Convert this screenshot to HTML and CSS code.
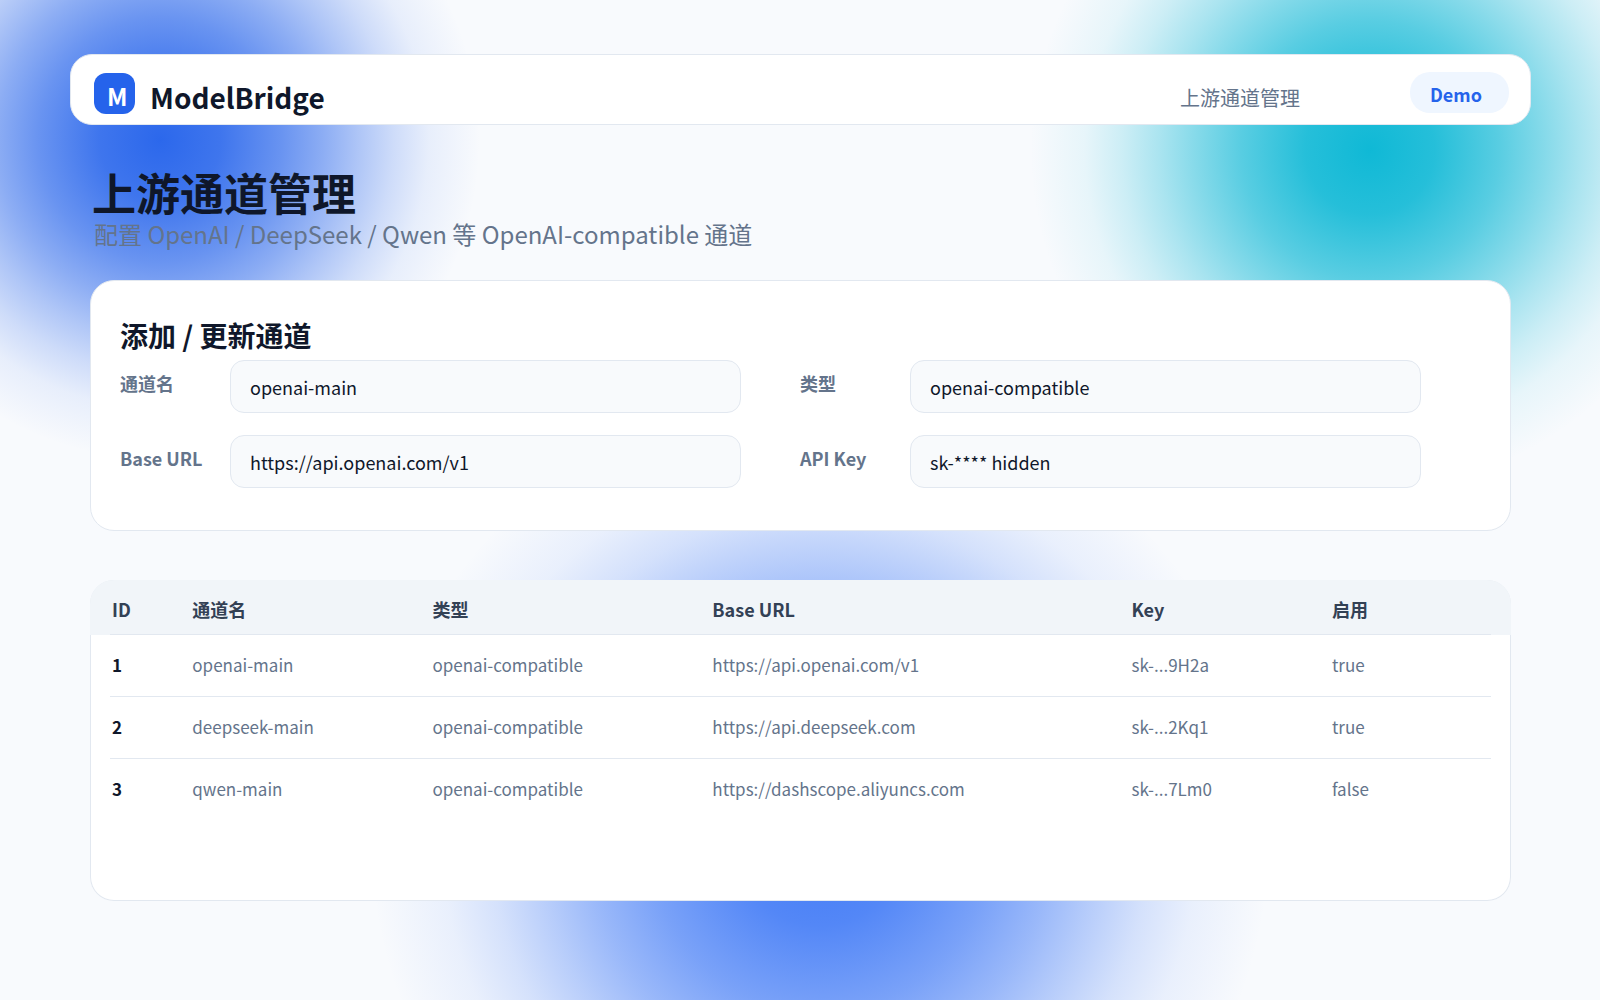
FILE: index.html
```html
<!DOCTYPE html>
<html lang="zh-CN">
<head>
<meta charset="utf-8">
<meta name="viewport" content="width=device-width, initial-scale=1">
<title>ModelBridge - 上游通道管理</title>
<link rel="stylesheet" href="styles.css">
</head>
<body>
<header class="topbar">
  <span class="logo">M</span>
  <span class="brand">ModelBridge</span>
  <span class="crumb">上游通道管理</span>
  <span class="badge">Demo</span>
</header>
<main class="content">
  <div class="page-head">
    <h1 class="title">上游通道管理</h1>
    <p class="subtitle">配置 OpenAI / DeepSeek / Qwen 等 OpenAI-compatible 通道</p>
  </div>

  <section class="card form-card">
    <h2 class="card-title">添加 / 更新通道</h2>
    <form class="fields">
      <div class="field">
        <label class="label" for="name">通道名</label>
        <input class="input" id="name" type="text" value="openai-main">
      </div>
      <div class="field">
        <label class="label" for="type">类型</label>
        <input class="input" id="type" type="text" value="openai-compatible">
      </div>
      <div class="field">
        <label class="label" for="url">Base URL</label>
        <input class="input" id="url" type="text" value="https://api.openai.com/v1">
      </div>
      <div class="field">
        <label class="label" for="key">API Key</label>
        <input class="input" id="key" type="text" value="sk-**** hidden">
      </div>
    </form>
  </section>

  <section class="table-card">
    <table class="channels">
      <colgroup>
        <col class="col-id"><col class="col-name"><col class="col-type"><col class="col-url"><col class="col-key"><col>
      </colgroup>
      <thead>
        <tr><th>ID</th><th>通道名</th><th>类型</th><th>Base URL</th><th>Key</th><th>启用</th></tr>
      </thead>
      <tbody>
        <tr><td>1</td><td>openai-main</td><td>openai-compatible</td><td>https://api.openai.com/v1</td><td>sk-...9H2a</td><td>true</td></tr>
        <tr><td>2</td><td>deepseek-main</td><td>openai-compatible</td><td>https://api.deepseek.com</td><td>sk-...2Kq1</td><td>true</td></tr>
        <tr><td>3</td><td>qwen-main</td><td>openai-compatible</td><td>https://dashscope.aliyuncs.com</td><td>sk-...7Lm0</td><td>false</td></tr>
      </tbody>
    </table>
  </section>
</main>
</body>
</html>
```
FILE: styles.css
```css
:root {
  --ink: #0f172a;
  --muted: #64748b;
  --line: #e2e8f0;
  --blue: #2563eb;
}

* {
  box-sizing: border-box;
}

body {
  margin: 0;
  min-height: 100vh;
  padding: 54px 69px 98px 70px;
  font-family: "Noto Sans CJK SC", "Noto Sans", sans-serif;
  font-size: 18px;
  line-height: 26px;
  color: var(--ink);
  background:
    radial-gradient(circle 320px at 160px 140px,
      rgb(37 99 235 / 97%), rgb(37 99 235 / 88%) 19%, rgb(37 99 235 / 68%) 38%,
      rgb(37 99 235 / 51%) 51%, rgb(37 99 235 / 35%) 62%, rgb(37 99 235 / 20%) 73%,
      rgb(37 99 235 / 8%) 84%, rgb(37 99 235 / 0%)),
    radial-gradient(circle 340px at 1370px 150px,
      rgb(6 182 212 / 96%), rgb(6 182 212 / 87%) 19%, rgb(6 182 212 / 66%) 38%,
      rgb(6 182 212 / 48%) 51%, rgb(6 182 212 / 32%) 62%, rgb(6 182 212 / 18%) 73%,
      rgb(6 182 212 / 7%) 84%, rgb(6 182 212 / 0%)),
    radial-gradient(circle 450px at 820px 840px,
      rgb(59 118 246 / 97%), rgb(59 118 246 / 87%) 19%, rgb(59 118 246 / 67%) 38%,
      rgb(59 118 246 / 50%) 51%, rgb(59 118 246 / 34%) 62%, rgb(59 118 246 / 19%) 73%,
      rgb(59 118 246 / 8%) 84%, rgb(59 118 246 / 0%)),
    #f8fafd;
}

.topbar {
  display: flex;
  align-items: flex-start;
  height: 71px;
  padding: 17px 21px 0 23px;
  background: #fff;
  border: 1px solid var(--line);
  border-radius: 22px;
}

.logo {
  width: 41px;
  height: 41px;
  margin: 1px 15px 0 0;
  padding: 5px 0 0 13px;
  border-radius: 12px;
  background: var(--blue);
  color: #fff;
  font-size: 24px;
  line-height: 35px;
  font-weight: 700;
}

.brand {
  padding-top: 5px;
  font-size: 28px;
  line-height: 41px;
  font-weight: 700;
}

.crumb {
  margin-left: auto;
  padding-top: 11px;
  font-size: 20px;
  line-height: 29px;
  color: var(--muted);
}

.badge {
  min-width: 99px;
  height: 41px;
  margin-left: 110px;
  padding: 9px 20px 0;
  border-radius: 20px;
  background: #eff6ff;
  color: var(--blue);
  font-weight: 700;
}

.content {
  padding: 35px 20px 0;
}

.page-head {
  padding: 9px 4px 29px 2px;
}

.title {
  margin: 0;
  font-size: 44px;
  line-height: 47px;
  font-weight: 700;
}

.subtitle {
  margin: 0;
  padding-left: 2px;
  font-size: 24px;
  line-height: 35px;
  color: var(--muted);
}

.card {
  background: #fff;
  border: 1px solid var(--line);
  border-radius: 24px;
}

.form-card {
  padding: 34px 89px 42px 29px;
}

.card-title {
  margin: 0 0 4px;
  font-size: 28px;
  line-height: 41px;
  font-weight: 700;
}

.fields {
  display: grid;
  grid-template-columns: 1fr 1fr;
  gap: 22px 59px;
}

.field {
  display: grid;
  grid-template-columns: 110px 1fr;
}

.label {
  padding-top: 10px;
  font-weight: 700;
  color: var(--muted);
}

.input {
  width: 100%;
  height: 53px;
  padding: 0 19px;
  border: 1px solid var(--line);
  border-radius: 14px;
  background: #f8fafc;
  color: var(--ink);
  font: inherit;
}

.table-card {
  min-height: 321px;
  margin-top: 49px;
  overflow: hidden;
  border-radius: 24px;
  background: #fff;
  box-shadow: inset 0 0 0 1px var(--line);
}

.channels {
  width: 100%;
  table-layout: fixed;
  border-collapse: separate;
  border-spacing: 0;
  text-align: left;
}

.col-id { width: 7.2%; }
.col-name { width: 16.9%; }
.col-type { width: 19.7%; }
.col-url { width: 29.5%; }
.col-key { width: 14.1%; }

/* Row rules stop 20px short of the card's edges. */
.channels tr {
  background: linear-gradient(var(--line), var(--line)) center bottom / calc(100% - 40px) 1px no-repeat;
}

.channels thead tr {
  background-color: #f1f5f9;
}

.channels tbody tr:last-child {
  background: none;
}

.channels th,
.channels td {
  padding: 0;
}

.channels th {
  height: 55px;
  padding-top: 2px;
  color: #334155;
}

.channels td {
  height: 62px;
  padding-bottom: 2px;
  font-size: 17px;
  color: var(--muted);
}

.channels th:first-child,
.channels td:first-child {
  padding-left: 22px;
}

.channels td:first-child {
  font-weight: 700;
  color: var(--ink);
}
```
